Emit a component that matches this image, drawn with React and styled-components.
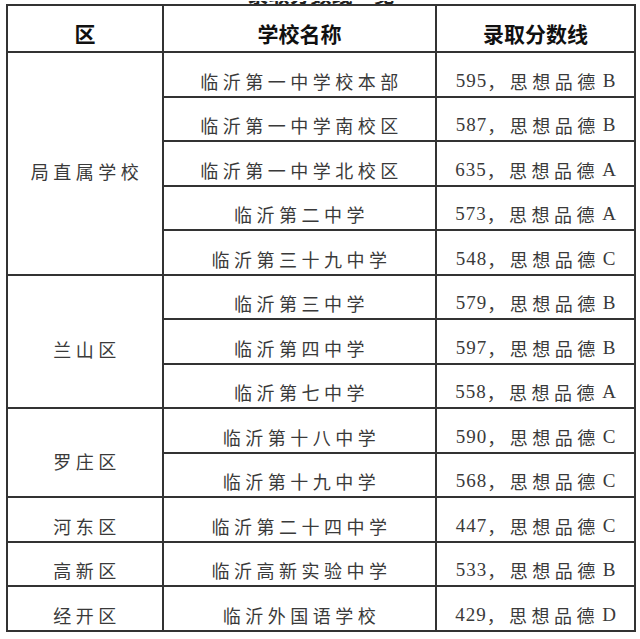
import styled, { createGlobalStyle } from "styled-components";

const GlobalStyle = createGlobalStyle`
  html, body {
    margin: 0;
    padding: 0;
    background: #fff;
  }
`;

const data = [
  {
    district: "局直属学校",
    schools: [
      ["临沂第一中学校本部", "595", "B"],
      ["临沂第一中学南校区", "587", "B"],
      ["临沂第一中学北校区", "635", "A"],
      ["临沂第二中学", "573", "A"],
      ["临沂第三十九中学", "548", "C"],
    ],
  },
  {
    district: "兰山区",
    schools: [
      ["临沂第三中学", "579", "B"],
      ["临沂第四中学", "597", "B"],
      ["临沂第七中学", "558", "A"],
    ],
  },
  {
    district: "罗庄区",
    schools: [
      ["临沂第十八中学", "590", "C"],
      ["临沂第十九中学", "568", "C"],
    ],
  },
  { district: "河东区", schools: [["临沂第二十四中学", "447", "C"]] },
  { district: "高新区", schools: [["临沂高新实验中学", "533", "B"]] },
  { district: "经开区", schools: [["临沂外国语学校", "429", "D"]] },
];

const Page = styled.div`
  width: 640px;
  height: 639px;
  overflow: hidden;
  background: #fff;
  padding-left: 6px;
  padding-top: 1px;
  box-sizing: border-box;
`;

// only the bottom edge of the heading is in the shot
const Title = styled.div`
  height: 3px;
  overflow: hidden;
  display: flex;
  align-items: flex-end;
  justify-content: center;
  padding-right: 4px;
  font-family: "Noto Sans CJK SC", sans-serif;
  font-weight: 700;
  font-size: 21px;
  line-height: 21px;
  color: #222;
`;

const Grid = styled.div`
  display: grid;
  grid-template-columns: 156px 273px 199px;
  grid-template-rows: 47px repeat(13, 44.5px);
  width: 630px;
  box-sizing: border-box;
  border-top: 2px solid #333;
  border-left: 2px solid #333;
`;

const Cell = styled.div`
  grid-row: span ${(p) => p.$span || 1};
  border-right: 2px solid #333;
  border-bottom: 2px solid #333;
  display: flex;
  align-items: center;
  justify-content: center;
  box-sizing: border-box;
  white-space: nowrap;
`;

const HeadCell = styled(Cell)`
  padding-top: 9px;
  font-family: "Noto Sans CJK SC", sans-serif;
  font-weight: 700;
  font-size: 21px;
  color: #111;
`;

const BodyCell = styled(Cell)`
  padding-top: ${(p) => (p.$span > 1 ? 16 : 13)}px;
  padding-left: 4px;
  font-family: "Noto Sans CJK SC", sans-serif;
  font-weight: 400;
  font-size: 18px;
  letter-spacing: 4.5px;
  color: #3a3a3a;
`;

const ScoreCell = styled(BodyCell)`
  letter-spacing: 4.5px;
  padding-left: 0;
`;

const Num = styled.span`
  font-family: "Liberation Serif", serif;
  font-size: 19px;
  letter-spacing: 1px;
`;

const Grade = styled.span`
  font-family: "Liberation Serif", serif;
  font-size: 19px;
  letter-spacing: 0;
  margin-left: 3px;
`;

export default function App() {
  return (
    <Page>
      <GlobalStyle />
      <Title>录取分数线一览</Title>
      <Grid>
        <HeadCell>区</HeadCell>
        <HeadCell>学校名称</HeadCell>
        <HeadCell>录取分数线</HeadCell>
        {data.map((group) => [
          <BodyCell key={group.district} $span={group.schools.length}>
            {group.district}
          </BodyCell>,
          ...group.schools.map(([name, score, grade]) => [
            <BodyCell key={name}>{name}</BodyCell>,
            <ScoreCell key={name + "-s"}>
              <Num>{score}</Num>，思想品德
              <Grade>{grade}</Grade>
            </ScoreCell>,
          ]),
        ])}
      </Grid>
    </Page>
  );
}
